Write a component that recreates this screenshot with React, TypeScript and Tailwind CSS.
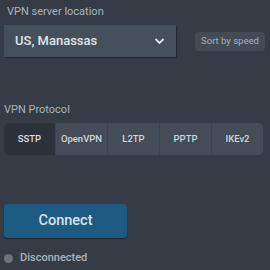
import React, { useState } from "react";

const protocols = ["SSTP", "OpenVPN", "L2TP", "PPTP", "IKEv2"];

export default function App() {
  const [active, setActive] = useState("SSTP");

  return (
    <div
      className="w-[270px] h-[270px] bg-[#353c45] overflow-hidden"
      style={{ fontFamily: "Roboto, 'Noto Sans', sans-serif" }}
    >
      <div className="pt-[4px] pl-[7px] text-[11px] text-[#aab3bd] leading-[16px]">VPN server location</div>

      <div className="flex items-center mt-[5px] pl-[4px]">
        <div className="w-[172px] h-[32px] bg-[#46505b] shadow-[1px_1px_1px_rgba(0,0,0,0.35)] flex items-center justify-between pl-[11px] pr-[11px]">
          <span className="text-[13px] font-medium text-[#dfe4e9]">US, Manassas</span>
          <svg width="11" height="8" viewBox="0 0 11 8" fill="none">
            <path d="M1.5 2 L5.5 6 L9.5 2" stroke="#dfe4e9" strokeWidth="1.8" />
          </svg>
        </div>
        <button className="ml-[19px] w-[70px] h-[19px] rounded-[4px] bg-[#434c56] text-[9.5px] text-[#a7afb8] leading-none">
          Sort by speed
        </button>
      </div>

      <div className="mt-[45px] pl-[4px] text-[11px] text-[#aab3bd] leading-[16px]">VPN Protocol</div>

      <div className="mt-[5px] ml-[4px] w-[259px] h-[32px] rounded-[5px] overflow-hidden flex bg-[#434c57]">
        {protocols.map((p, i) => (
          <button
            key={p}
            onClick={() => setActive(p)}
            className={`flex-1 h-full text-[9.5px] font-medium ${i > 0 ? "border-l border-[#3a424c]" : ""} ${
              active === p ? "bg-[#2b3239] text-[#d7dde3]" : "text-[#cfd5db]"
            }`}
          >
            {p}
          </button>
        ))}
      </div>

      <button className="mt-[49px] ml-[4px] w-[123px] h-[34px] rounded-[4px] bg-[#1e5b82] shadow-[0_1px_1px_rgba(0,0,0,0.4)] text-[14.5px] font-medium text-[#d6e3ee]">
        Connect
      </button>

      <div className="mt-[12px] pl-[4px] flex items-center gap-[7px]">
        <span className="w-[9px] h-[9px] rounded-full bg-[#6b727a]" />
        <span className="text-[11px] font-medium text-[#aab3bd]">Disconnected</span>
      </div>
    </div>
  );
}
